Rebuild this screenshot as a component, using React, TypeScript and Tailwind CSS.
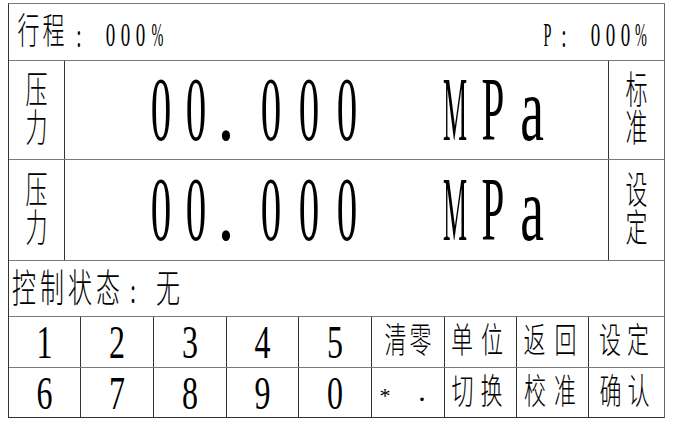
function G({ c, className = '' }: { c: string; className?: string }) {
  return <span className={`flex shrink-0 justify-center leading-none ${className}`}>{c}</span>;
}

function Stack({ a, b }: { a: string; b: string }) {
  return (
    <div className="flex scale-y-[1.72] flex-col items-center text-[22px] leading-[22px] font-light">
      <span>{a}</span>
      <span>{b}</span>
    </div>
  );
}

function BigValue() {
  const d = 'text-[41px] scale-y-[2.2]';
  return (
    <div className="flex items-center">
      <G c="0" className={`${d} ml-[86px] w-[20px]`} />
      <G c="0" className={`${d} ml-[15px] w-[20px]`} />
      <G c="." className={`${d} ml-[10px] w-[20px] scale-x-[1.7]`} />
      <G c="0" className={`${d} ml-[25px] w-[20px]`} />
      <G c="0" className={`${d} ml-[18px] w-[20px]`} />
      <G c="0" className={`${d} ml-[18px] w-[20px]`} />
      <G c="M" className={`${d} ml-[86px] w-[24px] scale-x-[0.66]`} />
      <G c="P" className={`${d} ml-[16px] w-[20px]`} />
      <G c="a" className={`${d} ml-[19px] w-[20px] scale-x-[1.3]`} />
    </div>
  );
}

function PressureRow({ side }: { side: [string, string] }) {
  return (
    <div className="flex border-t border-[#7a7a7a]">
      <div className="flex w-[55px] items-center justify-center">
        <Stack a="压" b="力" />
      </div>
      <div className="flex w-[544px] items-center border-l border-[#333]">
        <BigValue />
      </div>
      <div className="flex w-[56px] items-center justify-center border-l border-[#333]">
        <Stack a={side[0]} b={side[1]} />
      </div>
    </div>
  );
}

const keyDigit = 'text-[32px] scale-y-[1.45]';
const keyHan = 'text-[22px] scale-y-[1.6] font-light';

function Key({ children, className = '' }: { children: React.ReactNode; className?: string }) {
  return <div className={`flex items-center justify-center ${className}`}>{children}</div>;
}

function Pair({ a, b, gap }: { a: string; b: string; gap: string }) {
  return (
    <div className={`flex items-center ${gap}`}>
      <G c={a} className={keyHan} />
      <G c={b} className={keyHan} />
    </div>
  );
}

export default function App() {
  const small = 'text-[19px] scale-y-[1.75]';
  const han1 = 'text-[22px] scale-y-[1.65] font-light';
  const han4 = 'w-[28px] scale-y-[1.6] text-[24px] font-light';
  const cell = [
    'w-[71px]',
    'w-[73px] border-l border-[#333]',
    'w-[73px] border-l border-[#333]',
    'w-[72px] border-l border-[#333]',
    'w-[73px] border-l border-[#333]',
    'w-[73px] border-l border-[#333]',
    'w-[72px] border-l border-[#333]',
    'w-[72px] border-l border-[#333]',
    'w-[76px] border-l border-[#333]',
  ];

  return (
    <div className="min-h-screen bg-white font-['Liberation_Serif','Noto_Sans_CJK_SC',serif]">
      <div className="ml-[8px] mt-[3px] flex h-[415px] w-[657px] flex-col border border-t-[#7a7a7a] border-r-[#666] border-b-[#333] border-l-[#333] text-black">
        {/* travel / P */}
        <div className="flex h-[56px] items-center justify-between">
          <div className="flex items-center pl-[7px]">
            <G c="行" className={`${han1} w-[25px]`} />
            <G c="程" className={`${han1} w-[25px]`} />
            <G c=":" className={`${small} w-[26px] translate-y-[3px]`} />
            <G c="0" className={`${small} ml-[11px] w-[15px] translate-y-[2px]`} />
            <G c="0" className={`${small} w-[15px] translate-y-[2px]`} />
            <G c="0" className={`${small} w-[15px] translate-y-[2px]`} />
            <G c="%" className={`${small} w-[19px] translate-y-[2px] scale-x-[0.75]`} />
          </div>
          <div className="flex items-center pr-[15px]">
            <G c="P" className={`${small} w-[15px] translate-y-[2px] scale-x-[0.75]`} />
            <G c=":" className={`${small} w-[18px] translate-y-[3px]`} />
            <G c="0" className={`${small} ml-[15px] w-[15px] translate-y-[2px]`} />
            <G c="0" className={`${small} w-[15px] translate-y-[2px]`} />
            <G c="0" className={`${small} w-[15px] translate-y-[2px]`} />
            <G c="%" className={`${small} w-[16px] translate-y-[2px] scale-x-[0.75]`} />
          </div>
        </div>

        <div className="flex h-[99px]">
          <PressureRow side={['标', '准']} />
        </div>
        <div className="flex h-[101px]">
          <PressureRow side={['设', '定']} />
        </div>

        {/* control status */}
        <div className="flex h-[56px] items-center border-t border-[#7a7a7a] pl-[1px]">
          <G c="控" className={han4} />
          <G c="制" className={han4} />
          <G c="状" className={han4} />
          <G c="态" className={han4} />
          <G c=":" className="w-[22px] translate-y-[3px] scale-y-[1.6] text-[22px]" />
          <G c="无" className={`${han4} ml-[10px]`} />
        </div>

        {/* keypad */}
        <div className="flex h-[51px] border-t border-[#7a7a7a]">
          {['1', '2', '3', '4', '5'].map((k, i) => (
            <Key key={k} className={cell[i]}>
              <G c={k} className={keyDigit} />
            </Key>
          ))}
          <Key className={cell[5]}>
            <Pair a="清" b="零" gap="gap-[3px]" />
          </Key>
          <Key className={`${cell[6]} pr-[7px]`}>
            <Pair a="单" b="位" gap="gap-[8px]" />
          </Key>
          <Key className={`${cell[7]} pr-[5px]`}>
            <Pair a="返" b="回" gap="gap-[9px]" />
          </Key>
          <Key className={`${cell[8]} pr-[5px]`}>
            <Pair a="设" b="定" gap="gap-[6px]" />
          </Key>
        </div>
        <div className="flex h-[50px] border-t border-[#7a7a7a]">
          {['6', '7', '8', '9', '0'].map((k, i) => (
            <Key key={k} className={cell[i]}>
              <G c={k} className={keyDigit} />
            </Key>
          ))}
          <div className={`flex items-center pl-[8px] ${cell[5]}`}>
            <G c="*" className="w-[10px] translate-y-[3px] text-[22px]" />
            <G c="." className="ml-[27px] w-[10px] -translate-y-[2px] text-[30px]" />
          </div>
          <Key className={`${cell[6]} pr-[7px]`}>
            <Pair a="切" b="换" gap="gap-[7px]" />
          </Key>
          <Key className={`${cell[7]} pr-[5px]`}>
            <Pair a="校" b="准" gap="gap-[8px]" />
          </Key>
          <Key className={`${cell[8]} pr-[4px]`}>
            <Pair a="确" b="认" gap="gap-[6px]" />
          </Key>
        </div>
      </div>
    </div>
  );
}
